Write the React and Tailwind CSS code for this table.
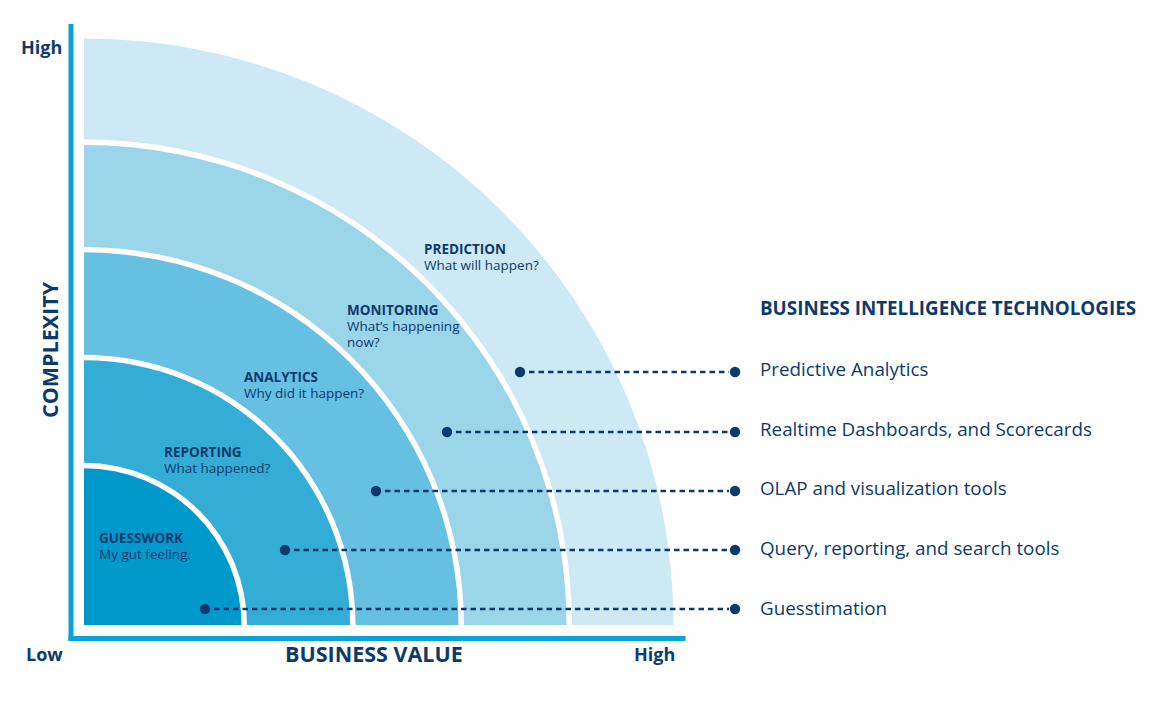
const BANDS = [
  { r: 589.5, fill: "#cdeaf4" },
  { r: 482.5, fill: "#9bd5ea" },
  { r: 374.5, fill: "#66c0e1" },
  { r: 266, fill: "#33acd6" },
  { r: 157.5, fill: "#0099cb" },
];

const GAP = 5.5;
const OX = 84;
const OY = 625;

const LABELS = [
  { x: 99, y: 543, title: "GUESSWORK", lines: ["My gut feeling."] },
  { x: 164, y: 457, title: "REPORTING", lines: ["What happened?"] },
  { x: 244, y: 382, title: "ANALYTICS", lines: ["Why did it happen?"] },
  { x: 347, y: 315, title: "MONITORING", lines: ["What’s happening", "now?"] },
  { x: 424, y: 254, title: "PREDICTION", lines: ["What will happen?"] },
];

const TECH = [
  { label: "Predictive Analytics", dotX: 520, y: 372 },
  { label: "Realtime Dashboards, and Scorecards", dotX: 447, y: 432 },
  { label: "OLAP and visualization tools", dotX: 376, y: 491 },
  { label: "Query, reporting, and search tools", dotX: 285, y: 550 },
  { label: "Guesstimation", dotX: 205, y: 609 },
];

const NAVY = "#0d3a6c";

// slightly flattened quarter ellipse, like the source artwork
function quarter(r) {
  const ry = r * 0.995;
  return `M${OX},${OY} L${OX},${OY - ry} A${r},${ry} 0 0 1 ${OX + r},${OY} Z`;
}

function Chart() {
  return (
    <svg width="745" height="719" viewBox="0 0 745 719" className="shrink-0">
      {BANDS.map((b, i) => (
        <g key={b.r}>
          <path d={quarter(b.r)} fill={b.fill} />
          {BANDS[i + 1] && <path d={quarter(BANDS[i + 1].r + GAP)} fill="#ffffff" />}
        </g>
      ))}

      {/* axes */}
      <rect x="68.5" y="24" width="5" height="617" fill="#0ba2d7" />
      <rect x="68.5" y="636" width="617" height="5" fill="#0ba2d7" />

      {LABELS.map((l) => (
        <g key={l.title} fill={NAVY}>
          <text x={l.x} y={l.y} fontSize="13.5" fontWeight="700">{l.title}</text>
          {l.lines.map((t, j) => (
            <text key={t} x={l.x} y={l.y + 16 * (j + 1)} fontSize="13.5">{t}</text>
          ))}
        </g>
      ))}

      {TECH.map((t) => (
        <g key={t.label} fill={NAVY}>
          <line x1={t.dotX + 9} y1={t.y} x2={729} y2={t.y} stroke={NAVY} strokeWidth="2.6" strokeDasharray="5.5 4" />
          <circle cx={t.dotX} cy={t.y} r="5.2" />
          <circle cx={735} cy={t.y} r="5.2" />
        </g>
      ))}

      <g fill={NAVY} fontWeight="700">
        <text x="21" y="54" fontSize="18">High</text>
        <text x="26" y="661" fontSize="18">Low</text>
        <text x="634" y="661" fontSize="18">High</text>
        <text x="285" y="662" fontSize="21.5">BUSINESS VALUE</text>
        <text transform="translate(58,350) rotate(-90)" textAnchor="middle" fontSize="21.5">COMPLEXITY</text>
      </g>
    </svg>
  );
}

export default function App() {
  return (
    <div className="flex w-[1149px] h-[719px] bg-white font-['Open_Sans',sans-serif] text-[#0d3a6c] overflow-hidden">
      <Chart />
      <div className="flex flex-col pl-[15px] pt-[296px]">
        <h2 className="text-[18.8px] leading-[24px] font-bold whitespace-nowrap">BUSINESS INTELLIGENCE TECHNOLOGIES</h2>
        <ul className="mt-[37px] flex flex-col">
          {TECH.map((t) => (
            <li key={t.label} className="h-[59.7px] text-[18.8px] leading-[24px] whitespace-nowrap">{t.label}</li>
          ))}
        </ul>
      </div>
    </div>
  );
}
